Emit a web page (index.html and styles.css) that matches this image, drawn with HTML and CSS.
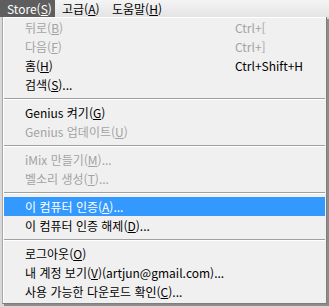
FILE: index.html
```html
<!DOCTYPE html>
<html lang="ko">
<head>
<meta charset="utf-8">
<link rel="stylesheet" href="styles.css">
</head>
<body>
<div class="menubar">
  <span class="mb-item mb-store active">Store(<u>S</u>)</span>
  <span class="mb-item mb-adv">고급(<u>A</u>)</span>
  <span class="mb-item">도움말(<u>H</u>)</span>
</div>
<div class="menu">
  <div class="row disabled"><span>뒤로(<u>B</u>)</span><span>Ctrl+[</span></div>
  <div class="row disabled"><span>다음(<u>F</u>)</span><span>Ctrl+]</span></div>
  <div class="row"><span>홈(<u>H</u>)</span><span>Ctrl+Shift+H</span></div>
  <div class="row"><span>검색(<u>S</u>)...</span><span></span></div>
  <div class="sep"></div>
  <div class="row"><span>Genius 켜기(<u>G</u>)</span><span></span></div>
  <div class="row disabled"><span>Genius 업데이트(<u>U</u>)</span><span></span></div>
  <div class="sep"></div>
  <div class="row disabled"><span>iMix 만들기(<u>M</u>)...</span><span></span></div>
  <div class="row disabled"><span>벨소리 생성(<u>T</u>)...</span><span></span></div>
  <div class="sep"></div>
  <div class="row selected"><span>이 컴퓨터 인증(<u>A</u>)...</span><span></span></div>
  <div class="row"><span>이 컴퓨터 인증 해제(<u>D</u>)...</span><span></span></div>
  <div class="sep"></div>
  <div class="row"><span>로그아웃(<u>O</u>)</span><span></span></div>
  <div class="row"><span>내 계정 보기(<u>V</u>)(artjun@gmail.com)...</span><span></span></div>
  <div class="row"><span>사용 가능한 다운로드 확인(<u>C</u>)...</span><span></span></div>
</div>
</body>
</html>
```

FILE: styles.css
```css
html, body {
  margin: 0;
  padding: 0;
}
body {
  width: 329px;
  height: 307px;
  overflow: hidden;
  background: #d9d9d9;
  font-family: "Noto Sans CJK KR", "Noto Sans", sans-serif;
  font-size: 12px;
  color: #000;
}
.menubar {
  height: 17px;
  display: flex;
  align-items: stretch;
  background: linear-gradient(#f4f4f4, #e4e4e4);
}
.mb-item {
  padding: 0 0 0 7px;
  line-height: 17px;
  box-sizing: border-box;
}
.mb-store {
  width: 55px;
  padding-left: 7px;
}
.mb-adv {
  width: 50px;
}
.mb-item.active {
  background: #5e5e5e;
  color: #fff;
}
.menu {
  margin-left: 2px;
  width: 323px;
  height: 285px;
  background: #f0f0f0;
  border-left: 1px solid #a8a8a8;
  border-right: 1px solid #7e7e7e;
  border-bottom: 1px solid #7e7e7e;
  box-shadow: inset 1px 1px 0 #fff, 2px 2px 0 #8c8c8c;
  padding: 1px 0 0;
  box-sizing: content-box;
}
.row {
  height: 19px;
  line-height: 19px;
  display: grid;
  grid-template-columns: 210px 1fr;
  padding-left: 21px;
  margin: 0 1px;
  white-space: nowrap;
}
.row.disabled {
  color: #a3a3a3;
}
.row.selected {
  background: #3399ff;
  color: #fff;
}
.sep {
  height: 9px;
  box-sizing: border-box;
  padding-top: 4px;
  margin: 0 1px;
}
.sep::before {
  content: "";
  display: block;
  height: 1px;
  background: #a0a0a0;
  border-bottom: 1px solid #fff;
}
u {
  text-decoration: underline;
  text-underline-offset: 1px;
}
```
